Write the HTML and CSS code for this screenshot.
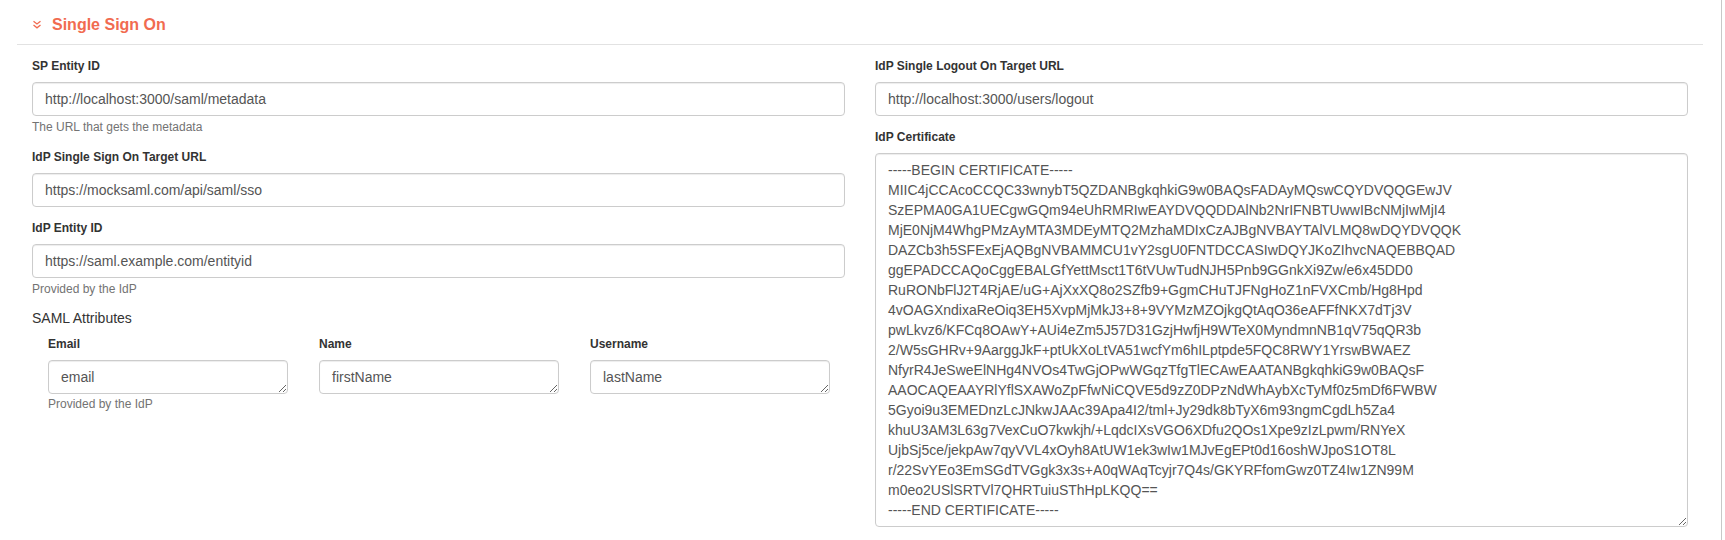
FILE: index.html
```html
<!DOCTYPE html>
<html>
<head>
<meta charset="utf-8">
<link rel="stylesheet" href="styles.css">
</head>
<body>
<div class="page">
  <section class="panel">
    <div class="panel-head">
      <svg class="chev" width="10" height="9" viewBox="0 0 10 9"><path d="M1.5 1.2 L5 4 L8.5 1.2 M1.5 5 L5 7.8 L8.5 5" fill="none" stroke="#f16b50" stroke-width="1.3"/></svg>
      <h2 class="panel-title">Single Sign On</h2>
    </div>
    <div class="row">
      <div class="col">
        <div class="form-group">
          <label class="lbl">SP Entity ID</label>
          <input class="ctrl" type="text" value="http://localhost:3000/saml/metadata">
          <p class="help">The URL that gets the metadata</p>
        </div>
        <div class="form-group">
          <label class="lbl">IdP Single Sign On Target URL</label>
          <input class="ctrl" type="text" value="https://mocksaml.com/api/saml/sso">
        </div>
        <div class="form-group tight">
          <label class="lbl">IdP Entity ID</label>
          <input class="ctrl" type="text" value="https://saml.example.com/entityid">
          <p class="help">Provided by the IdP</p>
        </div>
        <div class="attrs">
          <div class="attrs-title">SAML Attributes</div>
          <div class="attrs-grid">
            <div class="attr">
              <label class="lbl">Email</label>
              <textarea class="ctrl small-area" rows="1">email</textarea>
              <p class="help help-attr">Provided by the IdP</p>
            </div>
            <div class="attr">
              <label class="lbl">Name</label>
              <textarea class="ctrl small-area" rows="1">firstName</textarea>
            </div>
            <div class="attr">
              <label class="lbl">Username</label>
              <textarea class="ctrl small-area" rows="1">lastName</textarea>
            </div>
          </div>
        </div>
      </div>
      <div class="col">
        <div class="form-group">
          <label class="lbl">IdP Single Logout On Target URL</label>
          <input class="ctrl" type="text" value="http://localhost:3000/users/logout">
        </div>
        <div class="form-group">
          <label class="lbl">IdP Certificate</label>
          <textarea class="ctrl cert" rows="18">-----BEGIN CERTIFICATE-----
MIIC4jCCAcoCCQC33wnybT5QZDANBgkqhkiG9w0BAQsFADAyMQswCQYDVQQGEwJV
SzEPMA0GA1UECgwGQm94eUhRMRIwEAYDVQQDDAlNb2NrIFNBTUwwIBcNMjIwMjI4
MjE0NjM4WhgPMzAyMTA3MDEyMTQ2MzhaMDIxCzAJBgNVBAYTAlVLMQ8wDQYDVQQK
DAZCb3h5SFExEjAQBgNVBAMMCU1vY2sgU0FNTDCCASIwDQYJKoZIhvcNAQEBBQAD
ggEPADCCAQoCggEBALGfYettMsct1T6tVUwTudNJH5Pnb9GGnkXi9Zw/e6x45DD0
RuRONbFlJ2T4RjAE/uG+AjXxXQ8o2SZfb9+GgmCHuTJFNgHoZ1nFVXCmb/Hg8Hpd
4vOAGXndixaReOiq3EH5XvpMjMkJ3+8+9VYMzMZOjkgQtAqO36eAFFfNKX7dTj3V
pwLkvz6/KFCq8OAwY+AUi4eZm5J57D31GzjHwfjH9WTeX0MyndmnNB1qV75qQR3b
2/W5sGHRv+9AarggJkF+ptUkXoLtVA51wcfYm6hILptpde5FQC8RWY1YrswBWAEZ
NfyrR4JeSweElNHg4NVOs4TwGjOPwWGqzTfgTlECAwEAATANBgkqhkiG9w0BAQsF
AAOCAQEAAYRlYflSXAWoZpFfwNiCQVE5d9zZ0DPzNdWhAybXcTyMf0z5mDf6FWBW
5Gyoi9u3EMEDnzLcJNkwJAAc39Apa4I2/tml+Jy29dk8bTyX6m93ngmCgdLh5Za4
khuU3AM3L63g7VexCuO7kwkjh/+LqdcIXsVGO6XDfu2QOs1Xpe9zIzLpwm/RNYeX
UjbSj5ce/jekpAw7qyVVL4xOyh8AtUW1ek3wIw1MJvEgEPt0d16oshWJpoS1OT8L
r/22SvYEo3EmSGdTVGgk3x3s+A0qWAqTcyjr7Q4s/GKYRFfomGwz0TZ4Iw1ZN99M
m0eo2USlSRTVl7QHRTuiuSThHpLKQQ==
-----END CERTIFICATE-----</textarea>
        </div>
      </div>
    </div>
  </section>
</div>
</body>
</html>
```
FILE: styles.css
```css
* { box-sizing: border-box; }
html, body { margin: 0; padding: 0; background: #fff; }
body {
  font-family: "Liberation Sans", Arial, Helvetica, sans-serif;
  font-size: 14px;
  line-height: 20px;
  color: #333;
}
.page {
  width: 1722px;
  min-height: 540px;
  padding: 0 18px 0 17px;
  border-right: 1px solid #c8c8c8;
}
.panel-head {
  display: flex;
  align-items: center;
  gap: 10px;
  padding: 13px 15px 8px;
  border-bottom: 1px solid #e2e2e2;
}
.chev { display: block; flex: none; }
.panel-title {
  margin: 0;
  font-size: 16px;
  line-height: 23px;
  font-weight: bold;
  color: #f16b50;
}
.row {
  display: flex;
  padding-top: 13px;
}
.col {
  flex: 1 1 0;
  padding: 0 15px;
  min-width: 0;
}
.form-group { margin-bottom: 13px; }
.form-group.tight { margin-bottom: 10px; }
.lbl {
  display: block;
  font-size: 12px;
  line-height: 17px;
  font-weight: bold;
  color: #333;
  margin-bottom: 7px;
}
.ctrl {
  display: block;
  width: 100%;
  height: 34px;
  padding: 6px 12px;
  font-family: inherit;
  font-size: 14px;
  line-height: 20px;
  color: #555;
  background: #fff;
  border: 1px solid #ccc;
  border-radius: 4px;
  box-shadow: inset 0 1px 1px rgba(0,0,0,.075);
  margin: 0;
  outline: none;
}
textarea.ctrl { resize: vertical; overflow: hidden; }
.cert { height: 374px; white-space: pre; }
.help {
  margin: 3px 0 3px;
  font-size: 12px;
  line-height: 17px;
  color: #737373;
}
.help-attr { margin-top: 2px; }
.attrs-title {
  font-size: 14px;
  line-height: 20px;
  color: #333;
  margin-bottom: 8px;
}
.attrs-grid {
  display: grid;
  grid-template-columns: 1fr 1fr 1fr;
  column-gap: 31px;
  padding: 0 15px 0 16px;
}
```
